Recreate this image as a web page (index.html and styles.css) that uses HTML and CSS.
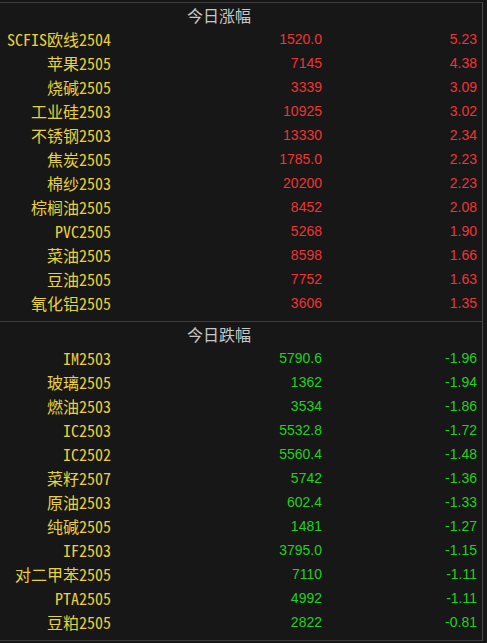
FILE: index.html
```html
<!DOCTYPE html>
<html lang="zh-CN">
<head>
    <meta charset="UTF-8">
    <title>今日涨跌幅</title>
    <link rel="stylesheet" href="styles.css">
</head>
<body>
    <div class="board">
        <div class="section up">
            <div class="section-title">今日涨幅</div>
            <div class="row"><span class="name">SCFIS欧线2504</span><span class="price">1520.0</span><span class="pct">5.23</span></div>
            <div class="row"><span class="name">苹果2505</span><span class="price">7145</span><span class="pct">4.38</span></div>
            <div class="row"><span class="name">烧碱2505</span><span class="price">3339</span><span class="pct">3.09</span></div>
            <div class="row"><span class="name">工业硅2503</span><span class="price">10925</span><span class="pct">3.02</span></div>
            <div class="row"><span class="name">不锈钢2503</span><span class="price">13330</span><span class="pct">2.34</span></div>
            <div class="row"><span class="name">焦炭2505</span><span class="price">1785.0</span><span class="pct">2.23</span></div>
            <div class="row"><span class="name">棉纱2503</span><span class="price">20200</span><span class="pct">2.23</span></div>
            <div class="row"><span class="name">棕榈油2505</span><span class="price">8452</span><span class="pct">2.08</span></div>
            <div class="row"><span class="name">PVC2505</span><span class="price">5268</span><span class="pct">1.90</span></div>
            <div class="row"><span class="name">菜油2505</span><span class="price">8598</span><span class="pct">1.66</span></div>
            <div class="row"><span class="name">豆油2505</span><span class="price">7752</span><span class="pct">1.63</span></div>
            <div class="row"><span class="name">氧化铝2505</span><span class="price">3606</span><span class="pct">1.35</span></div>
        </div>
        <div class="section down">
            <div class="section-title">今日跌幅</div>
            <div class="row"><span class="name">IM2503</span><span class="price">5790.6</span><span class="pct">-1.96</span></div>
            <div class="row"><span class="name">玻璃2505</span><span class="price">1362</span><span class="pct">-1.94</span></div>
            <div class="row"><span class="name">燃油2503</span><span class="price">3534</span><span class="pct">-1.86</span></div>
            <div class="row"><span class="name">IC2503</span><span class="price">5532.8</span><span class="pct">-1.72</span></div>
            <div class="row"><span class="name">IC2502</span><span class="price">5560.4</span><span class="pct">-1.48</span></div>
            <div class="row"><span class="name">菜籽2507</span><span class="price">5742</span><span class="pct">-1.36</span></div>
            <div class="row"><span class="name">原油2503</span><span class="price">602.4</span><span class="pct">-1.33</span></div>
            <div class="row"><span class="name">纯碱2505</span><span class="price">1481</span><span class="pct">-1.27</span></div>
            <div class="row"><span class="name">IF2503</span><span class="price">3795.0</span><span class="pct">-1.15</span></div>
            <div class="row"><span class="name">对二甲苯2505</span><span class="price">7110</span><span class="pct">-1.11</span></div>
            <div class="row"><span class="name">PTA2505</span><span class="price">4992</span><span class="pct">-1.11</span></div>
            <div class="row"><span class="name">豆粕2505</span><span class="price">2822</span><span class="pct">-0.81</span></div>
        </div>
    </div>
</body>
</html>
```

FILE: styles.css
```css
html, body {
    margin: 0;
    padding: 0;
    background-color: #171717;
}
body {
    padding-top: 2px;
}
.board {
    width: 482px;
    border-right: 1px solid #4a4a4a;
    border-top: 1px solid #3c3c3c;
}
.section {
    padding-bottom: 6px;
    border-bottom: 1px solid #3c3c3c;
}
.section-title {
    height: 24px;
    line-height: 24px;
    padding-left: 187px;
    color: #c8c8c8;
    font-family: "Noto Sans Mono CJK SC", "Liberation Mono", "Noto Sans CJK SC", monospace;
    font-size: 16px;
}
.row {
    display: grid;
    grid-template-columns: 111px 211px 155px;
    height: 24px;
    line-height: 24px;
}
.name {
    text-align: right;
    color: #e8d23a;
    font-family: "Noto Sans Mono CJK SC", "Liberation Mono", "Noto Sans CJK SC", monospace;
    font-size: 16px;
    white-space: nowrap;
}
.price,
.pct {
    text-align: right;
    font-family: "Liberation Sans", Arial, sans-serif;
    font-size: 14px;
}
.up .price,
.up .pct {
    color: #f03434;
}
.down .price,
.down .pct {
    color: #1ed21e;
}
```
